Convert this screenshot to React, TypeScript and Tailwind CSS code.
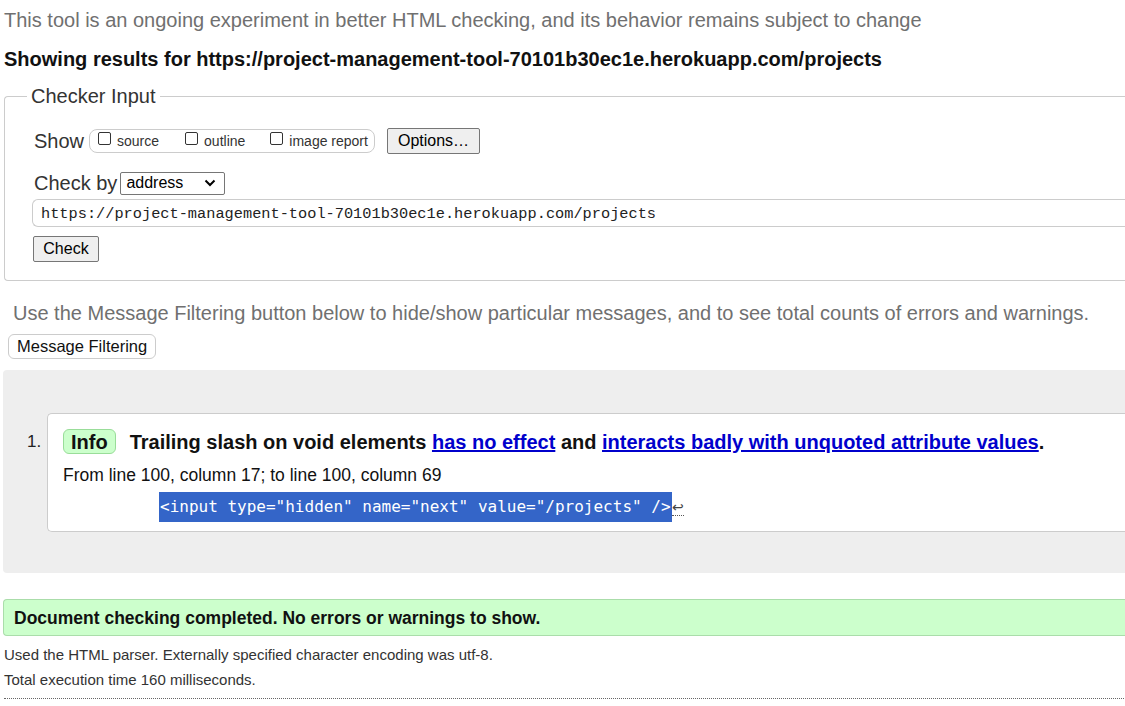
const sans = "font-['Liberation_Sans',Arial,sans-serif]";

function Checkbox({ label, className }: { label: string; className?: string }) {
  return (
    <span className={`flex items-center ${className ?? ""}`}>
      <span className="relative -top-[3px] mr-[6px] inline-block h-[13px] w-[13px] rounded-[2px] border border-[#333] bg-white" />
      <span className="text-[14px] text-[#333]">{label}</span>
    </span>
  );
}

function Btn({ children, className }: { children: React.ReactNode; className?: string }) {
  return (
    <span
      className={`inline-flex items-center justify-center rounded-[2px] border border-[#767676] bg-[#efefef] text-[16px] text-black ${className ?? ""}`}
    >
      {children}
    </span>
  );
}

export default function App() {
  return (
    <div className={`h-[706px] w-full overflow-hidden bg-white ${sans}`}>
      <div className="w-[1180px] pl-[4px]">
        <p className="pt-[9px] text-[20px] leading-[23px] text-[#707070]">
          This tool is an ongoing experiment in better HTML checking, and its behavior remains subject to change
        </p>
        <p className="mt-[16px] text-[20px] font-bold leading-[23px] text-[#111]">
          Showing results for https://project-management-tool-70101b30ec1e.herokuapp.com/projects
        </p>

        {/* checker input */}
        <div className="relative mt-[25px] h-[185px] rounded-l-[4px] border border-r-0 border-[#ccc]">
          <span className="absolute left-[22px] top-[-13px] bg-white px-[4px] text-[20px] leading-[24px] text-[#333]">
            Checker Input
          </span>
          <div className="pl-[29px] pt-[31px]">
            <div className="flex items-center">
              <span className="text-[20px] leading-[24px] text-[#333]">Show</span>
              <div className="ml-[5px] flex h-[24px] w-[286px] items-center rounded-[8px] border border-[#ccc] pl-[8px]">
                <Checkbox label="source" />
                <Checkbox label="outline" className="ml-[26px]" />
                <Checkbox label="image report" className="ml-[25px]" />
              </div>
              <Btn className="ml-[12px] h-[26px] w-[93px]">Options…</Btn>
            </div>
            <div className="mt-[17px] flex items-center">
              <span className="text-[20px] leading-[24px] text-[#333]">Check by</span>
              <span className="ml-[3px] flex h-[23px] w-[105px] items-center justify-between rounded-[2px] border border-[#767676] bg-white pl-[5px] pr-[8px] text-[16px] text-black">
                address
                <svg viewBox="0 0 12 8" className="h-[8px] w-[12px]" fill="none" stroke="black" strokeWidth="2">
                  <path d="M1.5 1.5 L6 6 L10.5 1.5" />
                </svg>
              </span>
            </div>
            <div className="-ml-[2px] mt-[4px] flex h-[28px] items-center rounded-l-[6px] border border-r-0 border-[#ccc] pl-[8px] pt-[2px] font-['Liberation_Mono',monospace] text-[15.3px] text-[#222]">
              https://project-management-tool-70101b30ec1e.herokuapp.com/projects
            </div>
            <Btn className="-ml-[1px] mt-[9px] h-[26px] w-[66px]">Check</Btn>
          </div>
        </div>

        <p className="ml-[9px] mt-[20px] text-[20px] leading-[24px] text-[#707070]">
          Use the Message Filtering button below to hide/show particular messages, and to see total counts of errors and warnings.
        </p>
        <span className="ml-[4px] mt-[9px] inline-flex h-[25px] items-center rounded-[6px] border border-[#ccc] bg-white px-[8px] text-[16.5px] text-[#111]">
          Message Filtering
        </span>

        {/* messages */}
        <div className="-ml-[1px] mt-[11px] h-[203px] rounded-l-[4px] bg-[#eee] pl-[44px] pt-[43px]">
          <div className="flex h-[119px] rounded-l-[5px] border border-r-0 border-[#ccc] bg-white">
            <span className="-ml-[21px] mt-[17px] w-[21px] text-[17px] leading-[22px] text-[#222]">1.</span>
            <div className="pl-[15px] pt-[15px]">
              <div className="flex items-center">
                <span className="flex h-[25px] items-center rounded-[6px] border border-[#9d9] bg-[#ccffcc] px-[7px] text-[20px] font-bold text-[#111]">
                  Info
                </span>
                <span className="ml-[14px] text-[20px] font-bold leading-[24px] text-[#111]">
                  Trailing slash on void elements{" "}
                  <a className="text-[#0000cc] underline">has no effect</a> and{" "}
                  <a className="text-[#0000cc] underline">interacts badly with unquoted attribute values</a>.
                </span>
              </div>
              <p className="mt-[10px] text-[17.5px] leading-[22px] text-[#111]">
                From line 100, column 17; to line 100, column 69
              </p>
              <div className="ml-[96px] mt-[6px] flex items-center">
                <span className="flex h-[30px] items-center bg-[#3465c8] px-[1px] font-['DejaVu_Sans_Mono',monospace] text-[16px] text-white">
                  {'<input type="hidden" name="next" value="/projects" />'}
                </span>
                <span className="border-b border-dotted border-[#555] text-[14px] leading-[16px] text-[#444]">↩</span>
              </div>
            </div>
          </div>
        </div>

        <div className="-ml-[1px] mt-[26px] flex h-[37px] items-center rounded-l-[4px] border border-r-0 border-[#aaddaa] bg-[#ccffcc] pl-[10px] text-[17.5px] font-bold text-[#111]">
          Document checking completed. No errors or warnings to show.
        </div>
        <p className="mt-[9px] text-[15px] leading-[19px] text-[#333]">
          Used the HTML parser. Externally specified character encoding was utf-8.
        </p>
        <p className="mt-[6px] text-[15px] leading-[19px] text-[#333]">Total execution time 160 milliseconds.</p>
        <div className="mt-[9px] border-t border-dotted border-[#666]" />
      </div>
    </div>
  );
}
